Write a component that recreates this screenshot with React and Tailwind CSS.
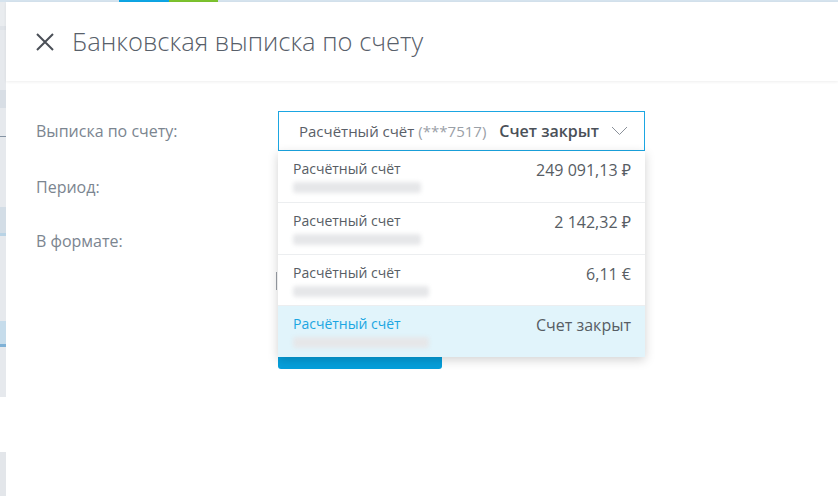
import React from "react";

const accounts = [
  { title: "Расчётный счёт", amount: "249 091,13 ₽", blur: "w-[128px]" },
  { title: "Расчетный счет", amount: "2 142,32 ₽", blur: "w-[128px]" },
  { title: "Расчётный счёт", amount: "6,11 €", blur: "w-[136px]" },
  { title: "Расчётный счёт", amount: "Счет закрыт", blur: "w-[136px]", active: true },
];

const Chevron = () => (
  <svg width="17" height="10" viewBox="0 0 17 10" fill="none">
    <path d="M1 1l7.5 7.5L16 1" stroke="#8a9099" strokeWidth="1" />
  </svg>
);

const CloseIcon = () => (
  <svg width="20" height="20" viewBox="0 0 20 20" fill="none">
    <path d="M2 2l16 16M18 2L2 18" stroke="#4a4f57" strokeWidth="2" />
  </svg>
);

const BackStrip = () => (
  <div className="w-[6px] shrink-0 flex flex-col bg-[#e6e9ed]">
    <div className="h-[24px] bg-[#e9ecef]" />
    <div className="h-[4px] bg-[#dfe3e8]" />
    <div className="h-[60px]" />
    <div className="h-[18px] bg-[#d8dee5]" />
    <div className="h-[28px]" />
    <div className="h-[1px] bg-[#8593a3]" />
    <div className="h-[70px]" />
    <div className="h-[26px] bg-[#d3dde6]" />
    <div className="h-[3px] bg-[#b9d3e5]" />
    <div className="h-[85px]" />
    <div className="h-[23px] bg-[#c6dceb]" />
    <div className="h-[3px] bg-[#7fb1d6]" />
    <div className="h-[50px]" />
    <div className="h-[55px] bg-white" />
    <div className="flex-1 bg-[#e3e6ea]" />
  </div>
);

export default function App() {
  return (
    <div
      className="w-[838px] h-[496px] overflow-hidden bg-white flex flex-col"
      style={{ fontFamily: '"Open Sans", "Noto Sans", sans-serif' }}
    >
      <div className="h-[2px] flex bg-[#d5e3ee] shrink-0">
        <div className="w-[119px]" />
        <div className="w-[50px] bg-[#0ea5e4]" />
        <div className="w-[49px] bg-[#7cc22e]" />
      </div>
      <div className="flex flex-1 min-h-0">
        <BackStrip />
        <div className="flex-1 flex flex-col bg-white">
          <header className="h-[79px] flex items-center gap-[17px] pl-[29px] shadow-[0_1px_3px_rgba(0,0,0,0.07)]">
            <CloseIcon />
            <h1 className="text-[25.5px] font-light text-[#58606a]">
              Банковская выписка по счету
            </h1>
          </header>

          <div className="flex pl-[30px] pt-[30px]">
            <div className="w-[242px] flex flex-col text-[16px] text-[#7b8590]">
              <div className="h-[40px] flex items-center">Выписка по счету:</div>
              <div className="h-[40px] mt-[16px] flex items-center">Период:</div>
              <div className="h-[40px] mt-[14px] flex items-center">В формате:</div>
            </div>

            <div className="w-[367px] flex flex-col">
              <div className="relative">
                <div className="h-[40px] border border-[#1ba6e2] flex items-center pl-[20px] pr-[16px] text-[15px]">
                  <span className="text-[#5a6068]">Расчётный счёт</span>
                  <span className="ml-[4px] text-[#9aa0a7]">(***7517)</span>
                  <span className="ml-[13px] text-[16px] font-semibold text-[#4a5058]">Счет закрыт</span>
                  <span className="ml-auto">
                    <Chevron />
                  </span>
                </div>

                <div className="absolute left-0 top-[40px] w-[367px] bg-white shadow-[0_3px_10px_rgba(0,0,0,0.18)] z-10">
                  {accounts.map((a, i) => (
                    <div
                      key={i}
                      className={
                        "flex justify-between pl-[15px] pr-[14px] pt-[8px] " +
                        (i < 2 ? "h-[52px] " : "h-[51px] ") +
                        (a.active ? "bg-[#e1f4fb]" : "bg-white") +
                        (i < 3 ? " border-b border-[#eceef0]" : "")
                      }
                    >
                      <div className="flex flex-col">
                        <span
                          className={
                            "text-[14px] leading-[20px] " +
                            (a.active ? "text-[#1ba6e2]" : "text-[#575d64]")
                          }
                        >
                          {a.title}
                        </span>
                        <div className={"mt-[3px] h-[11px] rounded-[3px] bg-[#e6e7e9] blur-[2px] " + a.blur} />
                      </div>
                      <span className="text-[16px] leading-[22px] text-[#575d64]">{a.amount}</span>
                    </div>
                  ))}
                </div>
              </div>

              <div className="h-[18px] mt-[121px] w-[1px] ml-[-2px] bg-[#9aa0a7]" />
              <div className="mt-[39px] w-[164px] h-[40px] rounded-[3px] bg-[#059fdb]" />
            </div>
          </div>
        </div>
      </div>
    </div>
  );
}
